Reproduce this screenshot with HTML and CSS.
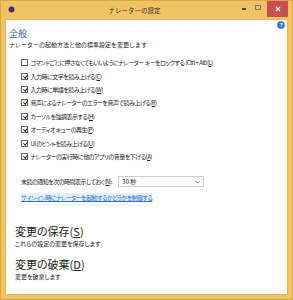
FILE: index.html
```html
<!DOCTYPE html>
<html>
<head>
    <title>ナレーターの設定</title>
    <link rel="stylesheet" href="styles.css">
</head>
<body>
    <div class="window">
        <div class="titlebar">
            <svg class="app-icon" width="8" height="8" viewBox="0 0 8 8">
                <circle cx="4.5" cy="4.5" r="3" fill="#3a2f7a"/>
                <path d="M1 2 L3 1 L3 3 Z" fill="#9aa0c8"/>
            </svg>
            <div class="title">ナレーターの設定</div>
            <div class="controls">
                <span class="btn-min"></span>
                <span class="btn-max"></span>
                <span class="btn-close">
                    <svg width="6" height="6" viewBox="0 0 6 6">
                        <path d="M1 1 L5 5 M5 1 L1 5" stroke="#fff" stroke-width="1.2"/>
                    </svg>
                </span>
            </div>
        </div>
        <div class="content">
            <div class="intro">
                <div>
                    <h1>全般</h1>
                    <p class="subtitle">ナレーターの起動方法と他の標準設定を変更します</p>
                </div>
                <svg class="help" width="8" height="8" viewBox="0 0 8 8">
                    <circle cx="4" cy="4" r="3.8" fill="#2f6fc8"/>
                    <text x="4" y="6.2" text-anchor="middle" font-size="6" font-weight="bold" fill="#fff" font-family="Liberation Sans, sans-serif">?</text>
                </svg>
            </div>

            <ul class="options">
                <li><span class="box"></span>コマンドごとに押さなくてもいいようにナレーター キーをロックする (Ctrl + Alt)(<u>L</u>)</li>
                <li><span class="box checked"></span>入力時に文字を読み上げる(<u>C</u>)</li>
                <li><span class="box checked"></span>入力時に単語を読み上げる(<u>W</u>)</li>
                <li><span class="box checked"></span>音声によるナレーターのエラーを音声で読み上げる(<u>R</u>)</li>
                <li><span class="box checked"></span>カーソルを強調表示する(<u>H</u>)</li>
                <li><span class="box checked"></span>オーディオ キューの再生(<u>P</u>)</li>
                <li><span class="box checked"></span>UI のヒントを読み上げる(<u>U</u>)</li>
                <li><span class="box checked"></span>ナレーターの実行時に他のアプリの音量を下げる(<u>A</u>)</li>
            </ul>

            <div class="notify">
                <span>未読の通知を次の時間表示しておく(<u>N</u>):</span>
                <div class="select">
                    <span>30 秒</span>
                    <svg width="5" height="4" viewBox="0 0 5 4">
                        <path d="M0.5 1 L2.5 3 L4.5 1" stroke="#666" stroke-width="0.9" fill="none"/>
                    </svg>
                </div>
            </div>

            <a class="signin" href="#">サインイン時にナレーターを起動するかどうかを制御する</a>

            <div class="action first">
                <h2>変更の保存(<u>S</u>)</h2>
                <p>これらの設定の変更を保存します</p>
            </div>
            <div class="action">
                <h2>変更の破棄(<u>D</u>)</h2>
                <p>変更を破棄します</p>
            </div>
        </div>
    </div>
</body>
</html>
```

FILE: styles.css
```css
body {
    margin: 0;
    padding: 0;
    font-family: 'Noto Sans CJK JP', sans-serif;
    font-feature-settings: "palt";
    color: #222;
}

.window {
    width: 293px;
    height: 300px;
    box-sizing: border-box;
    background-color: #f0c462;
    border: 1px solid #d8a940;
    padding: 0 4px 4px 4px;
    display: flex;
    flex-direction: column;
}

.titlebar {
    height: 18px;
    display: flex;
    align-items: flex-start;
    flex-shrink: 0;
}

.app-icon {
    margin: 4px 0 0 2px;
}

.title {
    flex: 1;
    text-align: center;
    font-size: 6.5px;
    line-height: 18px;
    color: #333;
    padding-left: 12px;
    font-feature-settings: normal;
}

.controls {
    display: flex;
    align-items: flex-start;
}

.btn-min {
    width: 4px;
    height: 1.5px;
    background: #444;
    margin: 7px 9px 0 0;
}

.btn-max {
    width: 4px;
    height: 3px;
    border: 1px solid #777;
    margin: 4px 6px 0 0;
}

.btn-close {
    width: 21px;
    height: 16px;
    background-color: #c84f4f;
    display: flex;
    align-items: center;
    justify-content: center;
}

.content {
    flex: 1;
    background-color: #fff;
    border: 1px solid #e3bb5e;
    padding: 0 0 0 3px;
}

.intro {
    display: flex;
    justify-content: space-between;
    align-items: flex-start;
}

h1 {
    margin: 7px 0 0 0;
    font-size: 9px;
    line-height: 13px;
    font-weight: normal;
    color: #2b5fab;
}

.subtitle {
    margin: 0;
    font-size: 6px;
    line-height: 9px;
    font-feature-settings: normal;
}

.help {
    margin: 1px 2px 0 0;
}

.options {
    list-style: none;
    margin: 7px 0 0 0;
    padding: 0 0 0 12px;
}

.options li {
    height: 13.4px;
    display: flex;
    align-items: center;
    font-size: 6px;
    letter-spacing: -0.5px;
    white-space: pre;
}

.box {
    width: 5px;
    height: 5px;
    border: 1px solid #666;
    margin-right: 2.5px;
    flex-shrink: 0;
    position: relative;
}

.box.checked::after {
    content: "";
    position: absolute;
    left: 1.5px;
    top: 0;
    width: 1.5px;
    height: 3px;
    border-right: 1px solid #222;
    border-bottom: 1px solid #222;
    transform: rotate(40deg);
}

.notify {
    margin: 13px 0 0 12px;
    display: flex;
    align-items: center;
    font-size: 6px;
    letter-spacing: -0.5px;
}

.select {
    width: 86px;
    height: 11px;
    box-sizing: border-box;
    margin-left: 6px;
    border: 1px solid #cfcfcf;
    background-color: #fcfcfc;
    display: flex;
    align-items: center;
    justify-content: space-between;
    padding: 0 3px;
    letter-spacing: 0;
}

.signin {
    display: block;
    width: fit-content;
    margin: 6px 0 0 12px;
    font-size: 6px;
    line-height: 9px;
    letter-spacing: -0.55px;
    color: #2a6fd0;
    background-color: #e6f1fc;
}

.action {
    margin: 8px 0 0 6px;
}

.action.first {
    margin-top: 21px;
}

h2 {
    margin: 0;
    font-size: 11px;
    line-height: 16px;
    font-weight: normal;
    color: #222;
}

.action p {
    margin: 0;
    font-size: 6px;
    line-height: 9px;
}
```
